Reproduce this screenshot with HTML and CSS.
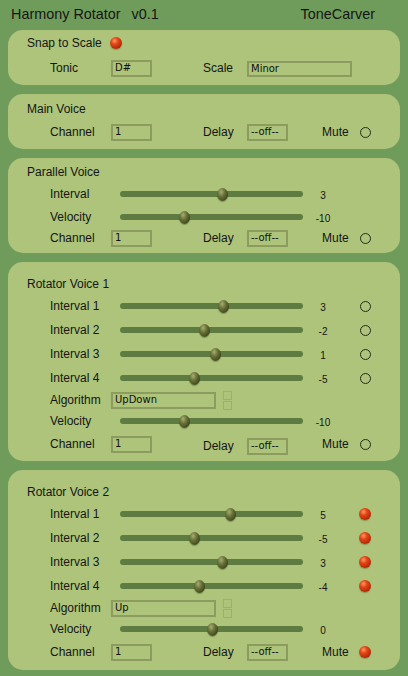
FILE: index.html
```html
<!DOCTYPE html>
<html>
<head>
<meta charset="utf-8">
<link rel="stylesheet" href="styles.css">
</head>
<body>
<header class="top">
  <span>Harmony Rotator</span><span class="ver">v0.1</span><span class="brand">ToneCarver</span>
</header>
<main class="panels">
  <section class="panel p-snap">
    <div class="title"><span>Snap to Scale</span><span class="led on snap-led"></span></div>
    <div class="row r-tonic">
      <span>Tonic</span><div class="field">D#</div><span></span><span>Scale</span><div class="field">Minor</div>
    </div>
  </section>

  <section class="panel p-main">
    <div class="title">Main Voice</div>
    <div class="row r-chan h24">
      <span>Channel</span><div class="field">1</div><span></span><span>Delay</span><div class="field">--off--</div><span></span><span>Mute</span><span class="led"></span>
    </div>
  </section>

  <section class="panel p-par">
    <div class="title">Parallel Voice</div>
    <div class="row srow h24"><span>Interval</span><div class="track"><span class="knob" style="left:102px"></span></div><span class="val">3</span></div>
    <div class="row srow h22"><span>Velocity</span><div class="track"><span class="knob" style="left:64px"></span></div><span class="val">-10</span></div>
    <div class="row r-chan h20">
      <span>Channel</span><div class="field">1</div><span></span><span>Delay</span><div class="field">--off--</div><span></span><span>Mute</span><span class="led"></span>
    </div>
  </section>

  <section class="panel p-rot">
    <div class="title">Rotator Voice 1</div>
    <div class="row srow h24"><span>Interval 1</span><div class="track"><span class="knob" style="left:103px"></span></div><span class="val">3</span><span class="led"></span></div>
    <div class="row srow h24"><span>Interval 2</span><div class="track"><span class="knob" style="left:84px"></span></div><span class="val">-2</span><span class="led"></span></div>
    <div class="row srow h24"><span>Interval 3</span><div class="track"><span class="knob" style="left:95px"></span></div><span class="val">1</span><span class="led"></span></div>
    <div class="row srow h24"><span>Interval 4</span><div class="track"><span class="knob" style="left:74px"></span></div><span class="val">-5</span><span class="led"></span></div>
    <div class="row r-algo h20"><span>Algorithm</span><div class="field">UpDown</div><span></span><div class="spin"><i></i><i></i></div></div>
    <div class="row srow h22"><span>Velocity</span><div class="track"><span class="knob" style="left:64px"></span></div><span class="val">-10</span></div>
    <div class="row r-chan h24">
      <span>Channel</span><div class="field">1</div><span></span><span class="dl">Delay</span><div class="field low">--off--</div><span></span><span>Mute</span><span class="led"></span>
    </div>
  </section>

  <section class="panel p-rot p-last">
    <div class="title">Rotator Voice 2</div>
    <div class="row srow h24"><span>Interval 1</span><div class="track"><span class="knob" style="left:110px"></span></div><span class="val">5</span><span class="led on"></span></div>
    <div class="row srow h24"><span>Interval 2</span><div class="track"><span class="knob" style="left:74px"></span></div><span class="val">-5</span><span class="led on"></span></div>
    <div class="row srow h24"><span>Interval 3</span><div class="track"><span class="knob" style="left:102px"></span></div><span class="val">3</span><span class="led on"></span></div>
    <div class="row srow h24"><span>Interval 4</span><div class="track"><span class="knob" style="left:79px"></span></div><span class="val">-4</span><span class="led on"></span></div>
    <div class="row r-algo h20"><span>Algorithm</span><div class="field">Up</div><span></span><div class="spin"><i></i><i></i></div></div>
    <div class="row srow h22"><span>Velocity</span><div class="track"><span class="knob" style="left:92px"></span></div><span class="val">0</span></div>
    <div class="row r-chan h24">
      <span>Channel</span><div class="field">1</div><span></span><span>Delay</span><div class="field">--off--</div><span></span><span>Mute</span><span class="led on"></span>
    </div>
  </section>
</main>
</body>
</html>
```
FILE: styles.css
```css
* { box-sizing: border-box; }

html, body {
  margin: 0;
  padding: 0;
}

body {
  width: 408px;
  height: 676px;
  overflow: hidden;
  background: #709c5b;
  font-family: "Liberation Sans", Arial, sans-serif;
  color: #151515;
}

.top {
  display: flex;
  align-items: center;
  height: 20px;
  margin: 4px 0 6px;
  padding: 0 33px 0 11px;
  font-size: 14.4px;
}

.ver { margin-left: 11px; }
.brand { margin-left: auto; }

.panels {
  display: flex;
  flex-direction: column;
  gap: 9px;
  padding: 0 8px;
}

.panel {
  background: #adc47a;
  border-radius: 15px;
  font-size: 12px;
  display: flex;
  flex-direction: column;
}

.p-snap { padding: 3px 0 5px; }
.p-main { padding: 5px 0 5px; }
.p-par { padding: 4px 0 5px; }
.p-rot { padding: 12px 0 5px; }
.p-last { padding-bottom: 6px; }

.title {
  display: flex;
  align-items: center;
  height: 20px;
  padding-left: 19px;
}

.row {
  display: grid;
  align-items: center;
  padding-left: 42px;
}

.h20 { height: 20px; }
.h22 { height: 22px; }
.h24 { height: 24px; }

.r-tonic {
  height: 24px;
  margin-top: 3px;
  grid-template-columns: 61px 41px 51px 44px 105px;
}

.p-main .r-chan { margin-top: 1px; }

.r-chan {
  grid-template-columns: 61px 41px 51px 44px 41px 34px 38px 11px;
}

.r-chan .dl { position: relative; top: 2px; }
.r-chan .low { position: relative; top: 2px; }

.r-algo {
  grid-template-columns: 61px 105px 7px 9px;
}

.srow {
  grid-template-columns: 70px 183px 40px 28px;
}

.field {
  height: 17px;
  border: 2px solid #8c9c60;
  padding: 0 2px;
  font-family: "DejaVu Sans", Verdana, sans-serif;
  font-size: 10px;
  line-height: 12px;
  color: #111;
  white-space: nowrap;
  overflow: hidden;
}

.r-tonic .field:last-child {
  height: 16px;
  position: relative;
  top: 1px;
}

.track {
  position: relative;
  height: 6px;
  border-radius: 3px;
  background: #5e7c41;
}

.knob {
  position: absolute;
  top: 50%;
  width: 11px;
  height: 13px;
  margin-left: -5.5px;
  margin-top: -6.5px;
  border-radius: 50%;
  background: radial-gradient(ellipse at 38% 30%, #a7ad78 0%, #6b7438 35%, #434c1f 70%, #2c3312 100%);
  box-shadow: 0 1px 1px rgba(40, 50, 20, 0.35);
}

.val {
  text-align: center;
  font-size: 10px;
  position: relative;
  top: 1px;
}

.led {
  justify-self: end;
  width: 11px;
  height: 11px;
  border-radius: 50%;
  border: 1.3px solid #262a1c;
}

.led.on {
  width: 12px;
  height: 12px;
  border: none;
  background: radial-gradient(circle at 38% 32%, #ff9a60 0%, #e5471a 30%, #bb2d08 65%, #6e1a04 100%);
  box-shadow: 0 1px 1px rgba(60, 30, 10, 0.3);
}

.snap-led { margin-left: 8px; }

.spin {
  display: flex;
  flex-direction: column;
  gap: 1px;
  width: 9px;
}

.spin i {
  display: block;
  height: 9px;
  border: 1px solid #9db06a;
}
```
